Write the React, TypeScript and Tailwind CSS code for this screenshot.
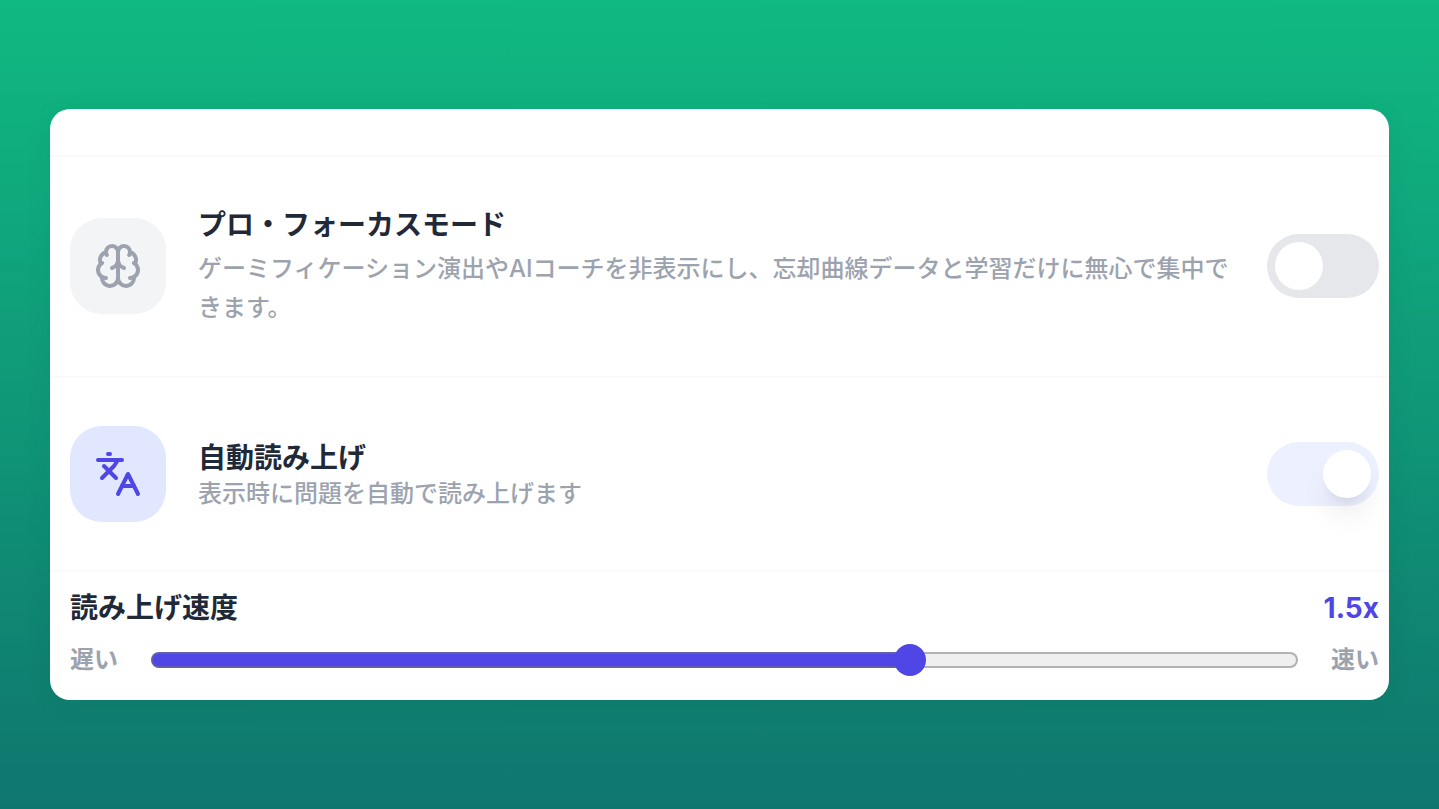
import React, { useState } from 'react';
import { Languages } from 'lucide-react';

const BrainIcon: React.FC = () => (
  <svg
    className="size-12"
    viewBox="0 0 24 24"
    fill="none"
    stroke="currentColor"
    strokeWidth="2"
    strokeLinecap="round"
    strokeLinejoin="round"
    aria-hidden="true"
  >
    <path d="M12 5a3 3 0 1 0-5.997.125 4 4 0 0 0-2.526 5.77 4 4 0 0 0 .556 6.588A4 4 0 1 0 12 18Z" />
    <path d="M12 5a3 3 0 1 1 5.997.125 4 4 0 0 1 2.526 5.77 4 4 0 0 1-.556 6.588A4 4 0 1 1 12 18Z" />
    <path d="M15 13a4.5 4.5 0 0 1-3-4 4.5 4.5 0 0 1-3 4" />
    <path d="M17.599 6.5a3 3 0 0 0 .399-1.375" />
    <path d="M6.003 5.125A3 3 0 0 0 6.401 6.5" />
    <path d="M3.477 10.896a4 4 0 0 1 .585-.396" />
    <path d="M19.938 10.5a4 4 0 0 1 .585.396" />
    <path d="M6 18a4 4 0 0 1-1.967-.516" />
    <path d="M19.967 17.484A4 4 0 0 1 18 18" />
  </svg>
);

interface ToggleRowProps {
  id: string;
  icon: React.ReactNode;
  rowClass: string;
  iconClass: string;
  title: string;
  description: string;
  descriptionClass: string;
  checked: boolean;
  onChange: (checked: boolean) => void;
}

const ToggleRow: React.FC<ToggleRowProps> = ({
  id,
  icon,
  rowClass,
  iconClass,
  title,
  description,
  descriptionClass,
  checked,
  onChange,
}) => {
  return (
    <div className={`flex items-center gap-8 border-t-2 border-[#f9fafb] pt-12 pl-5 pr-[10px] ${rowClass}`}>
      <div className={`flex size-24 shrink-0 items-center justify-center rounded-[32px] ${iconClass}`}>
        {icon}
      </div>
      <div className="min-w-0 flex-1">
        <label htmlFor={id} className="block text-[28px] leading-10 font-bold text-[#1f2937]">
          {title}
        </label>
        <p className={`text-2xl font-medium text-[#9ca3af] ${descriptionClass}`}>{description}</p>
      </div>
      <input
        id={id}
        type="checkbox"
        role="switch"
        checked={checked}
        onChange={(e) => onChange(e.target.checked)}
        className="flex h-16 w-28 shrink-0 cursor-pointer appearance-none items-center rounded-full bg-[#e5e7eb] px-2 before:size-12 before:rounded-full before:bg-white checked:justify-end checked:bg-[#ecf0ff] checked:before:shadow-[0_20px_30px_-6px_rgba(0,0,0,0.1),0_8px_12px_-8px_rgba(0,0,0,0.1)]"
      />
    </div>
  );
};

const MIN_SPEED = 0.5;
const MAX_SPEED = 2;

const App: React.FC = () => {
  const [focusMode, setFocusMode] = useState(false);
  const [autoRead, setAutoRead] = useState(true);
  const [speed, setSpeed] = useState(1.5);

  const filled = ((speed - MIN_SPEED) / (MAX_SPEED - MIN_SPEED)) * 100;

  return (
    <div className="flex min-h-screen flex-col justify-center bg-linear-to-b/srgb from-[#10b981] to-[#0f766e] px-[50px] font-['Inter','Noto_Sans_CJK_JP',sans-serif] [font-optical-sizing:none]">
      <main className="overflow-hidden rounded-[20px] bg-white pt-[46px] shadow-[0_4px_30px_rgba(0,0,0,0.05)]">
        <ToggleRow
          id="focus-mode"
          icon={<BrainIcon />}
          rowClass="pb-[49px]"
          iconClass="bg-[#f3f4f6] text-[#9ca3af]"
          title="プロ・フォーカスモード"
          description="ゲーミフィケーション演出やAIコーチを非表示にし、忘却曲線データと学習だけに無心で集中できます。"
          descriptionClass="mt-1 leading-[39px]"
          checked={focusMode}
          onChange={setFocusMode}
        />
        <ToggleRow
          id="auto-read"
          icon={<Languages size={48} />}
          rowClass="pb-12"
          iconClass="bg-[#e0e7ff] text-[#4f46e5]"
          title="自動読み上げ"
          description="表示時に問題を自動で読み上げます"
          descriptionClass="leading-8"
          checked={autoRead}
          onChange={setAutoRead}
        />

        <section className="border-t-2 border-[#f9fafb] pt-4 pr-[10px] pb-6 pl-5">
          <div className="mb-4 flex items-center justify-between text-[28px] leading-10 font-bold">
            <label htmlFor="speed" className="text-[#1f2937]">
              読み上げ速度
            </label>
            <output htmlFor="speed" className="text-[#4f46e5]">
              {speed}x
            </output>
          </div>
          <div className="flex items-center gap-[33px] text-2xl font-bold text-[#9ca3af]">
            <span>遅い</span>
            <input
              id="speed"
              type="range"
              min={MIN_SPEED}
              max={MAX_SPEED}
              step={0.1}
              value={speed}
              onChange={(e) => setSpeed(Number(e.target.value))}
              style={{ backgroundImage: `linear-gradient(to right, #4f46e5 ${filled}%, #efefef ${filled}%)` }}
              className="flex h-4 min-w-0 flex-1 cursor-pointer appearance-none items-center rounded-full border-2 border-[#767676]/50 bg-origin-border [&::-webkit-slider-thumb]:size-8 [&::-webkit-slider-thumb]:appearance-none [&::-webkit-slider-thumb]:rounded-full [&::-webkit-slider-thumb]:bg-[#4f46e5]"
            />
            <span>速い</span>
          </div>
        </section>
      </main>
    </div>
  );
};

export default App;
